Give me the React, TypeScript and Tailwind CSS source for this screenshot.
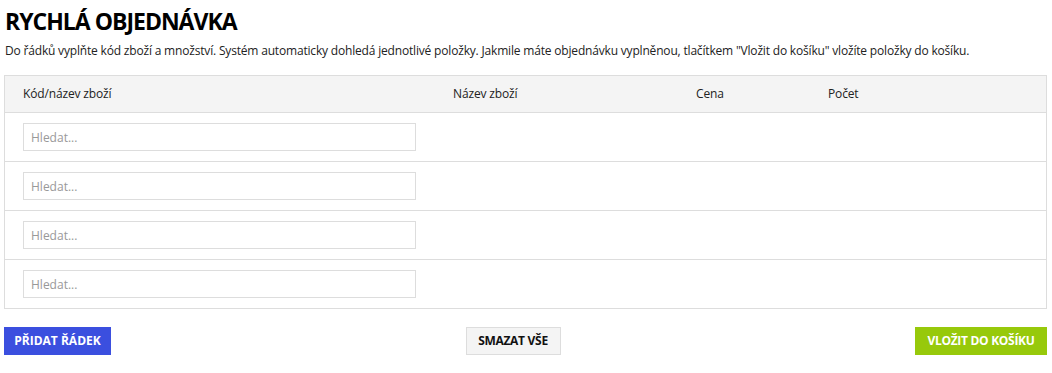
import { useState } from 'react';

const rows = [0, 1, 2, 3];

export default function App() {
  const [values, setValues] = useState<string[]>(['', '', '', '']);

  return (
    <div className="bg-white pl-[4px] pr-[5px] pt-[5px] text-[#222]" style={{ fontFamily: '"Open Sans", sans-serif' }}>
      <h1 className="pl-[1px] text-[23px] font-bold leading-[32px] tracking-[-1px] text-black">RYCHLÁ OBJEDNÁVKA</h1>
      <p className="mt-[5px] pl-[1px] text-[12px] leading-[18px] tracking-[-0.18px] text-[#222]">
        Do řádků vyplňte kód zboží a množství. Systém automaticky dohledá jednotlivé položky. Jakmile máte objednávku vyplněnou, tlačítkem "Vložit do košíku" vložíte položky do košíku.
      </p>

      <div className="mt-[15px] border border-[#dddddd]">
        {/* Header */}
        <div className="grid grid-cols-[430px_243px_132px_1fr] h-[37px] items-center bg-[#f4f4f4] border-b border-[#dddddd] text-[12px] tracking-[-0.15px] text-[#222]">
          <div className="px-[18px]">Kód/název zboží</div>
          <div className="px-[18px]">Název zboží</div>
          <div className="px-[18px]">Cena</div>
          <div className="px-[18px]">Počet</div>
        </div>

        {rows.map((i) => (
          <div
            key={i}
            className={`grid grid-cols-[430px_243px_132px_1fr] py-[10px] ${i < rows.length - 1 ? 'border-b border-[#dddddd]' : ''}`}
          >
            <div className="px-[18px]">
              <input
                type="text"
                value={values[i]}
                onChange={(e) => {
                  const next = [...values];
                  next[i] = e.target.value;
                  setValues(next);
                }}
                placeholder="Hledat..."
                className="block w-[393px] h-[28px] border border-[#dddddd] bg-white pl-[7px] text-[12px] text-[#222] placeholder:text-[#999] outline-none"
              />
            </div>
            <div />
            <div />
            <div />
          </div>
        ))}
      </div>

      <div className="mt-[18px] flex items-center justify-between">
        <button className="h-[28px] w-[107px] bg-[#3b4fdf] text-[12px] font-bold uppercase text-white">
          Přidat řádek
        </button>
        <button className="h-[28px] w-[95px] border border-[#dddddd] bg-[#f4f4f4] text-[12px] font-bold uppercase tracking-[-0.3px] text-[#111]">
          Smazat vše
        </button>
        <button className="h-[28px] w-[132px] bg-[#97c90b] text-[12px] font-bold uppercase tracking-[-0.3px] text-white">
          Vložit do košíku
        </button>
      </div>
    </div>
  );
}
